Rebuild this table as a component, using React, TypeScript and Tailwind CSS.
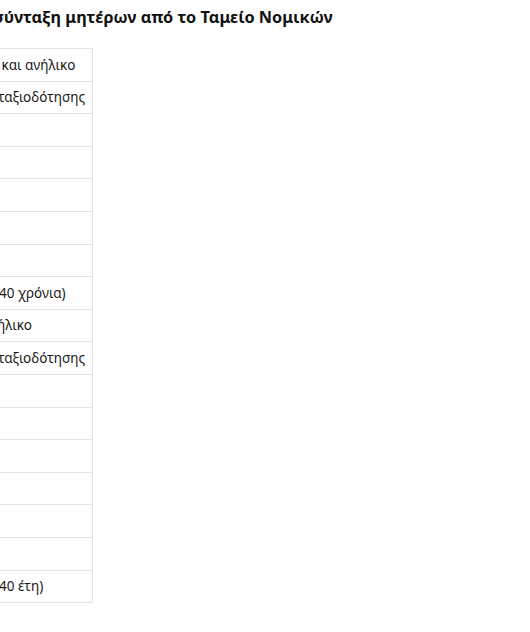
const rows = [
  'Μητέρα με τρία παιδιά και ανήλικο',
  'Κοινό όριο ηλικίας συνταξιοδότησης',
  '',
  '',
  '',
  '',
  '',
  'Μικτό ποσό σύνταξης (40 χρόνια)',
  'Μητέρα με το τέκνο ανήλικο',
  'Κοινό όριο ηλικίας συνταξιοδότησης',
  '',
  '',
  '',
  '',
  '',
  '',
  'Μικτό ποσό σύνταξης (40 έτη)',
];

export default function App() {
  return (
    <div className="w-[530px] h-[632px] overflow-hidden bg-white font-['Noto_Sans',sans-serif] text-[#1a1a1a]">
      <div className="-ml-[173px] pt-[5px]">
        <h2 className="text-[16.3px] leading-[24px] font-bold whitespace-nowrap text-[#111]">
          Πώς υπολογίζεται η σύνταξη μητέρων από το Ταμείο Νομικών
        </h2>
        <table className="mt-[19px] ml-[15px] w-[251px] border-collapse">
          <tbody>
            {rows.map((text, i) => (
              <tr key={i}>
                <td className="h-[32.6px] border border-[#e2e2e2] pl-[11px] text-[13.5px] whitespace-nowrap">
                  {text}
                </td>
              </tr>
            ))}
          </tbody>
        </table>
      </div>
    </div>
  );
}
